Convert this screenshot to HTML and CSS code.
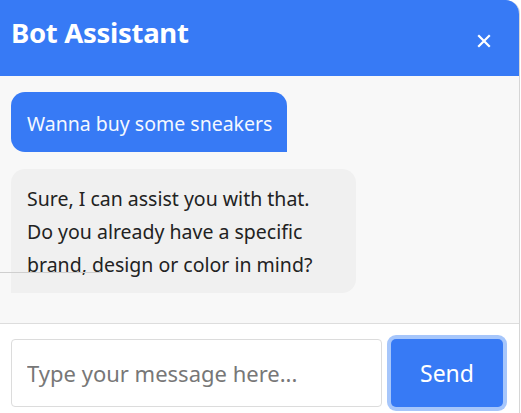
FILE: index.html
```html
<!DOCTYPE html>
<html>
<head>
<meta charset="utf-8">
<link rel="stylesheet" href="styles.css">
</head>
<body>
<div class="chat">
  <header class="chat-header">
    <h1 class="chat-title">Bot Assistant</h1>
    <button class="close-btn" aria-label="Close">
      <svg width="14" height="14" viewBox="0 0 14 14"><path d="M2 2 L12 12 M12 2 L2 12" stroke="#fff" stroke-width="2.2" stroke-linecap="square"/></svg>
    </button>
  </header>
  <main class="messages">
    <div class="msg msg-user">Wanna buy some sneakers</div>
    <div class="msg msg-bot">Sure, I can assist you with that.<br>Do you already have a specific<br>brand, design or color in mind?</div>
    <span class="stray-line"></span>
  </main>
  <footer class="composer">
    <input class="composer-input" type="text" placeholder="Type your message here...">
    <button class="send-btn">Send</button>
  </footer>
</div>
</body>
</html>
```

FILE: styles.css
```css
* { box-sizing: border-box; }
html, body { margin: 0; padding: 0; background: #ffffff; }
body { font-family: "Noto Sans", "Open Sans", sans-serif; }
.chat {
  width: 520px;
  height: 413px;
  display: flex;
  flex-direction: column;
  border-right: 1px solid #d6d6d6;
  border-top-right-radius: 14px;
  overflow: hidden;
}
.chat-header {
  height: 76px;
  background: #377af5;
  color: #fff;
  display: flex;
  align-items: flex-start;
  justify-content: space-between;
  padding: 0 28px 0 11px;
  flex-shrink: 0;
}
.chat-title {
  margin: 14px 0 0;
  font-size: 27.5px;
  font-weight: 700;
  letter-spacing: -0.3px;
}
.close-btn {
  margin-top: 34px;
  background: none;
  border: 0;
  padding: 0;
  width: 14px;
  height: 14px;
  display: flex;
}
.messages {
  position: relative;
  flex: 1;
  background: #f8f8f8;
  border-bottom: 1px solid #dddddd;
  padding: 16px 11px;
  display: flex;
  flex-direction: column;
  align-items: flex-start;
  gap: 17px;
}
.msg {
  font-size: 19.5px;
  line-height: 33px;
  padding: 13px 16px 12px;
  border-radius: 14px;
  white-space: nowrap;
}
.msg-user {
  background: #377af5;
  color: #f4f8ff;
  border-bottom-right-radius: 0;
  padding: 15px 16px 12px;
  width: 276px;
}
.msg-bot {
  background: #f0f0f0;
  color: #222;
  width: 345px;
  border-bottom-left-radius: 0;
}
.stray-line {
  position: absolute;
  left: 0;
  top: 196px;
  width: 101px;
  height: 1px;
  background: #cfcfcf;
}
.composer {
  height: 89px;
  display: flex;
  align-items: flex-start;
  padding: 15px 16px 0 11px;
  gap: 9px;
  flex-shrink: 0;
}
.composer-input {
  flex: 1;
  min-width: 0;
  height: 68px;
  border: 1px solid #dcdcdc;
  border-radius: 4px;
  padding: 0 15px;
  font-family: inherit;
  font-size: 22px;
  color: #333;
  outline: none;
}
.composer-input::placeholder { color: #777; }
.send-btn {
  width: 112px;
  flex-shrink: 0;
  height: 68px;
  background: #377af5;
  color: #fff;
  border: 0;
  border-radius: 5px;
  box-shadow: 0 0 0 4px #a6c6fb;
  font-family: inherit;
  font-size: 23px;
}
```
